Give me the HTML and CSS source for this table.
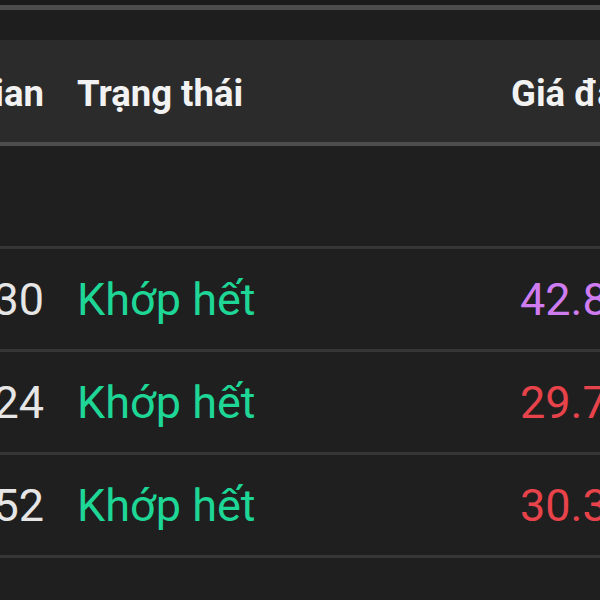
FILE: index.html
```html
<!DOCTYPE html>
<html>
<head>
    <title>Lệnh đã khớp</title>
    <link rel="stylesheet" href="styles.css">
</head>
<body>
    <div class="top-strip"></div>
    <div class="toolbar"></div>
    <table class="orders">
        <thead>
            <tr>
                <th class="col-time">Thời gian</th>
                <th class="col-status">Trạng thái</th>
                <th class="col-price">Giá đặt</th>
            </tr>
        </thead>
        <tbody>
            <tr class="empty-row"><td colspan="3"></td></tr>
            <tr>
                <td class="col-time">14:25:30</td>
                <td class="col-status matched">Khớp hết</td>
                <td class="col-price ceil">42.80</td>
            </tr>
            <tr>
                <td class="col-time">14:21:24</td>
                <td class="col-status matched">Khớp hết</td>
                <td class="col-price down">29.70</td>
            </tr>
            <tr>
                <td class="col-time">14:18:52</td>
                <td class="col-status matched">Khớp hết</td>
                <td class="col-price down">30.35</td>
            </tr>
        </tbody>
    </table>
</body>
</html>
```

FILE: styles.css
```css
body { margin: 0; background: #1f1f1f; font-family: Roboto, "Liberation Sans", sans-serif; overflow: hidden; }
.top-strip { height: 5px; background: #1b1b1b; border-bottom: 5px solid #4c4c4c; }
.toolbar { height: 30px; background: #1e1e1e; }

.orders {
    border-collapse: collapse;
    margin-left: -140px;
    width: 900px;
    table-layout: fixed;
}
.orders th {
    height: 98px;
    padding: 4px 0 0;
    background: #2b2b2b;
    border-bottom: 4px solid #4e4e4e;
    color: #f2f2f2;
    font-size: 36.5px;
    font-weight: 700;
    text-align: left;
}
.orders td {
    height: 100px;
    padding: 0;
    border-bottom: 3px solid #363636;
    color: #e6e6e6;
    font-size: 45px;
}
.orders .col-time { width: 184px; padding-right: 16px; text-align: right; }
.orders .col-status { width: 434px; padding-left: 17px; }
.orders th.col-price { padding-left: 0; }
.orders td.col-price { padding-left: 9px; }

.matched { color: #1ed696 !important; }
.ceil { color: #cf7cf0 !important; }
.down { color: #e8434b !important; }
```
